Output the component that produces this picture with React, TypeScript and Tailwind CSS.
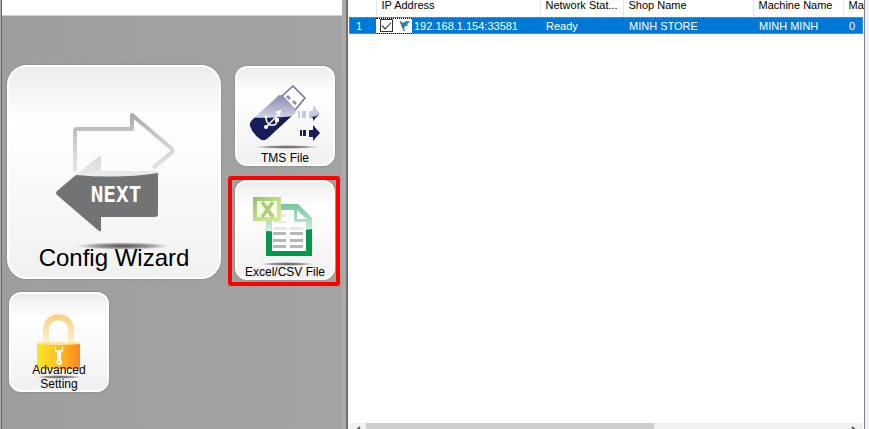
import type { ReactNode } from "react";

function NextArrows() {
  return (
    <svg viewBox="7 65 214 214" className="col-start-1 row-start-1 h-full w-full" aria-hidden="true">
      <defs>
        <linearGradient id="outlineFade" x1="0" y1="112" x2="0" y2="172" gradientUnits="userSpaceOnUse">
          <stop offset="0" stopColor="#a3a5a5" />
          <stop offset="0.3" stopColor="#bfc1c1" />
          <stop offset="0.6" stopColor="#d2d3d3" />
          <stop offset="1" stopColor="#e4e5e5" />
        </linearGradient>
        <linearGradient id="glossFade" x1="0" y1="156" x2="0" y2="176" gradientUnits="userSpaceOnUse">
          <stop offset="0" stopColor="#d6d7d7" />
          <stop offset="1" stopColor="#ececec" />
        </linearGradient>
        <radialGradient id="bigShadow">
          <stop offset="0" stopColor="#4f4b4b" />
          <stop offset="0.6" stopColor="#8f8c8c" stopOpacity="0.8" />
          <stop offset="1" stopColor="#dddddd" stopOpacity="0" />
        </radialGradient>
      </defs>
      <path
        d="M76 171Q75 170 75 168V131Q75 129 77 129H132V115L172 149Q173 150.500 172 152L153 168"
        fill="none"
        stroke="url(#outlineFade)"
        strokeWidth="4"
        strokeLinejoin="round"
      />
      <path d="M76 175L98 157Q101 154 101 158V171H156Q158 171 158 173Q120 179 76 175Z" fill="url(#glossFade)" />
      <path
        d="M76 175Q120 179 158 173V214Q158 217 155 217H101V230Q101 232 99 231L57 195Q55 193 57 191Z"
        fill="#717375"
      />
      <ellipse cx="123" cy="246" rx="50" ry="4" fill="url(#bigShadow)" />
      <text
        x="116"
        y="202"
        textAnchor="middle"
        fill="#ffffff"
        fontSize="21"
        fontWeight="700"
        fontFamily="'DejaVu Sans Mono', monospace"
      >
        NEXT
      </text>
    </svg>
  );
}

const usbBody =
  "M278 96Q280 94 282 96L295 109Q297 111 295 113L268 138Q264 142 260 139Q252 133 250 126Q249 123 252 120Z";

function UsbIcon() {
  return (
    <svg viewBox="235 66 100 100" className="col-start-1 row-start-1 h-full w-full" aria-hidden="true">
      <defs>
        <linearGradient id="usbGloss" x1="0" y1="94" x2="0" y2="119" gradientUnits="userSpaceOnUse">
          <stop offset="0" stopColor="#8688b4" />
          <stop offset="1" stopColor="#d5d6e5" />
        </linearGradient>
        <radialGradient id="usbShadow">
          <stop offset="0" stopColor="#4f4f4f" />
          <stop offset="0.6" stopColor="#858585" stopOpacity="0.8" />
          <stop offset="1" stopColor="#cccccc" stopOpacity="0" />
        </radialGradient>
        <clipPath id="usbTop">
          <path d="M245 80H297V115Q280 119 245 117Z" />
        </clipPath>
        <clipPath id="usbBottom">
          <path d="M245 117Q280 119 297 115V145H245Z" />
        </clipPath>
      </defs>
      <path d="M282 96L293 86L305 98L295 110Z" fill="#ffffff" stroke="#6d6fa2" strokeWidth="1.500" />
      <path d="M286 97L288 95L291 98L289 100ZM292 102L294 100L297 103L295 105Z" fill="#8b8db4" />
      <path d={usbBody} fill="url(#usbGloss)" clipPath="url(#usbTop)" />
      <path d={usbBody} fill="#171d5c" clipPath="url(#usbBottom)" />
      <path
        d="M266 127L279 114M269 124Q266 122 266 117M268 125H274Q277 124 277 120"
        fill="none"
        stroke="#ffffff"
        strokeWidth="1.500"
      />
      <circle cx="266" cy="127" r="2" fill="#ffffff" />
      <circle cx="266" cy="117" r="1.500" fill="#ffffff" />
      <path d="M275 112L281 110L280 116ZM275 118H279V122H275Z" fill="#ffffff" />
      <path d="M298 111H300V118H298ZM302 111H306V118H302ZM309 111H313V105L320 114L313 121V118H309Z" fill="#c8c9dc" />
      <path d="M311 117Q316 117 319 114L313 121V118Z" fill="#171d5c" />
      <path d="M300 130H302V136H300ZM303 130H306V136H303ZM309 130H313V125L320 133L313 141V137H309Z" fill="#171d5c" />
      <ellipse cx="287" cy="147" rx="34" ry="2" fill="url(#usbShadow)" />
    </svg>
  );
}

function ExcelIcon() {
  return (
    <svg viewBox="235 180 100 100" className="col-start-1 row-start-1 h-full w-full" aria-hidden="true">
      <defs>
        <linearGradient id="pageGloss" x1="0" y1="204" x2="0" y2="231" gradientUnits="userSpaceOnUse">
          <stop offset="0" stopColor="#70c798" />
          <stop offset="1" stopColor="#d3efdf" />
        </linearGradient>
        <linearGradient id="badgeFill" x1="0" y1="0" x2="1" y2="1">
          <stop offset="0" stopColor="#8fbe6a" />
          <stop offset="0.5" stopColor="#c1df83" />
          <stop offset="1" stopColor="#dce99c" />
        </linearGradient>
        <radialGradient id="excelShadow">
          <stop offset="0" stopColor="#4f4f4f" />
          <stop offset="0.6" stopColor="#858585" stopOpacity="0.8" />
          <stop offset="1" stopColor="#cccccc" stopOpacity="0" />
        </radialGradient>
      </defs>
      <path d="M266 204H298L312 218V229Q290 233 266 231Z" fill="url(#pageGloss)" />
      <path d="M266 231Q290 233 312 229V256H266Z" fill="#009b48" />
      <path d="M272 210H294V222H306V251H272Z" fill="#ffffff" />
      <path d="M297 210V219H306Z" fill="#ffffff" />
      <path d="M274 214H286V217H274ZM274 221H286V223H274ZM274 227H286V230H274ZM290 227H303V230H290Z" fill="#e7e7e7" />
      <path
        d="M273 232H286V235H273ZM290 232H303V235H290ZM273 239H286V242H273ZM290 239H303V242H290ZM273 245H286V248H273ZM290 245H303V248H290Z"
        fill="#b7b7b7"
      />
      <path d="M253 197H281V221H253Z" fill="url(#badgeFill)" />
      <path d="M257 201H277V217H257Z" fill="#f6faec" />
      <path d="M262 202L273 217M273 202L262 217" stroke="#acd06c" strokeWidth="3.500" />
      <ellipse cx="287" cy="264" rx="28" ry="2" fill="url(#excelShadow)" />
    </svg>
  );
}

function LockIcon() {
  return (
    <svg viewBox="9 292 100 100" className="col-start-1 row-start-1 h-full w-full" aria-hidden="true">
      <defs>
        <linearGradient id="lockBody">
          <stop offset="0" stopColor="#f9e722" />
          <stop offset="0.55" stopColor="#fdb924" />
          <stop offset="1" stopColor="#fb8620" />
        </linearGradient>
        <linearGradient id="shackle" x1="0" y1="314" x2="0" y2="343" gradientUnits="userSpaceOnUse">
          <stop offset="0" stopColor="#fbce7b" />
          <stop offset="1" stopColor="#fdefd2" />
        </linearGradient>
        <radialGradient id="lockShadow">
          <stop offset="0" stopColor="#4f4f4f" />
          <stop offset="0.6" stopColor="#858585" stopOpacity="0.8" />
          <stop offset="1" stopColor="#cccccc" stopOpacity="0" />
        </radialGradient>
      </defs>
      <path d="M46 343V330C46 313 71 313 71 330V343" fill="none" stroke="url(#shackle)" strokeWidth="6" />
      <rect x="37" y="342" width="43" height="27" fill="url(#lockBody)" />
      <path d="M37 342H80V344Q58 346 37 344Z" fill="#fde6a8" />
      <path
        d="M56 346Q54 348 55 350Q55 352 57 353V360Q56 362 56 363Q57 365 59 365Q61 365 62 363Q62 361 61 360V353Q63 352 63 350Q64 348 62 346V350H60L59 351L58 350H56Z"
        fill="#fffaf0"
      />
      <circle cx="59" cy="362" r="1" fill="#fdb924" />
      <ellipse cx="59" cy="377" rx="24" ry="2" fill="url(#lockShadow)" />
    </svg>
  );
}

function Tile({ icon, label, large = false }: { icon: ReactNode; label: ReactNode; large?: boolean }) {
  const size = large ? "size-[214px] rounded-[20px]" : "size-[100px] rounded-xl";
  const text = large ? "pb-1 text-2xl leading-8" : "text-xs leading-[14px]";
  return (
    <button
      type="button"
      className={`grid shrink-0 border-2 border-white bg-linear-to-b from-[#ececec] via-white via-25% to-[#f1f1f1] shadow-[0_0_2px_#777777] ${size}`}
    >
      <span className="col-start-1 row-start-1 -m-[2px] grid">{icon}</span>
      <span className={`z-10 col-start-1 row-start-1 -mb-px self-end text-center text-black ${text}`}>{label}</span>
    </button>
  );
}

function Flag() {
  return (
    <svg viewBox="0 0 12 12" className="size-3 shrink-0" aria-hidden="true">
      <path d="M1 1Q4 4 6 2Q8 0 11 2L8 4L9 6Q6 5 5 8L6 11H5L1 2Z" fill="#267fa7" />
      <path d="M1 1L5 11" stroke="#5b7f8d" />
    </svg>
  );
}

const headers = ["IP Address", "Network Stat...", "Shop Name", "Machine Name", "Ma"];
const values = ["Ready", "MINH STORE", "MINH MINH", "0"];

function DeviceTable() {
  return (
    <table className="w-full table-fixed border-collapse text-left text-[11px] leading-4 whitespace-nowrap">
      <colgroup>
        <col className="w-[27px]" />
        <col className="w-[164px]" />
        <col className="w-[83px]" />
        <col className="w-[130px]" />
        <col className="w-[90px]" />
        <col />
      </colgroup>
      <thead>
        <tr className="h-[17px] align-top">
          <td className="border-r border-[#e5e5e5] p-0" />
          {headers.map((h) => (
            <th key={h} scope="col" className="border-r border-[#e5e5e5] p-0 pl-[5px] font-normal last:border-r-0">
              <span className="-mt-[3px] block">{h}</span>
            </th>
          ))}
        </tr>
      </thead>
      <tbody>
        <tr className="h-[17px] bg-[#0078d7] text-white outline-1 -outline-offset-1 outline-dotted outline-[#f08a32]">
          <td className="p-0 pl-[7px]">1</td>
          <td className="p-0">
            <div className="flex items-center">
              <span className="flex h-4 w-9 items-center gap-1.5 border-y border-dotted border-black bg-white pl-1">
                <input
                  type="checkbox"
                  defaultChecked
                  aria-label="Select 192.168.1.154:33581"
                  className="grid size-[13px] shrink-0 appearance-none place-items-center border border-[#333333] bg-white before:mb-[3px] before:h-[5px] before:w-[9px] before:-rotate-45 checked:before:border-b checked:before:border-l checked:before:border-[#222222] checked:before:content-['']"
                />
                <Flag />
              </span>
              <span className="pl-[2px]">192.168.1.154:33581</span>
            </div>
          </td>
          {values.map((v) => (
            <td key={v} className="overflow-hidden p-0 pl-[6px]">
              {v}
            </td>
          ))}
        </tr>
      </tbody>
    </table>
  );
}

function HorizontalScrollbar() {
  return (
    <div className="flex h-[6px] overflow-hidden bg-[#f0f0f0]" aria-hidden="true">
      <svg viewBox="0 0 17 17" className="size-[17px] shrink-0">
        <path d="M11 4L7 8L11 12" fill="none" stroke="#555555" strokeWidth="2" />
      </svg>
      <div className="flex-1">
        <div className="h-full w-3/5 bg-[#cdcdcd]" />
      </div>
      <svg viewBox="0 0 17 17" className="size-[17px] shrink-0">
        <path d="M6 4L10 8L6 12" fill="none" stroke="#555555" strokeWidth="2" />
      </svg>
    </div>
  );
}

export default function App() {
  return (
    <main className="flex h-screen overflow-hidden bg-[#f0f0f0] font-['Liberation_Sans',Arial,sans-serif] text-black">
      <section className="flex w-[348px] shrink-0 border-r-2 border-l border-r-[#707070] border-l-[#aaaaaa] bg-[#aaaaaa]">
        <div className="flex-1 border-l border-[#666666] bg-linear-to-r from-[#9e9e9e] to-[#a3a3a3]">
          <div className="h-4 border-b border-[#d0d0d0] bg-white" />
          <div className="flex gap-[14px] pt-[49px] pl-[5px]">
            <Tile large icon={<NextArrows />} label="Config Wizard" />
            <div className="flex flex-col gap-[14px] pt-px">
              <Tile icon={<UsbIcon />} label="TMS File" />
              <div className="relative">
                <Tile icon={<ExcelIcon />} label="Excel/CSV File" />
                <div className="pointer-events-none absolute -top-1 -right-[5px] -bottom-1.5 -left-[7px] rounded-[3px] border-4 border-[#ff0000]" />
              </div>
            </div>
          </div>
          <div className="pt-3 pl-[7px]">
            <Tile
              icon={<LockIcon />}
              label={
                <>
                  Advanced
                  <br />
                  Setting
                </>
              }
            />
          </div>
        </div>
        <div className="w-1" />
      </section>
      <section className="ml-px flex min-w-0 flex-1 flex-col justify-between bg-white pr-px">
        <DeviceTable />
        <HorizontalScrollbar />
      </section>
      <div className="w-[5px] shrink-0 border-l border-[#828790] bg-[#f0f0f0]" />
    </main>
  );
}
